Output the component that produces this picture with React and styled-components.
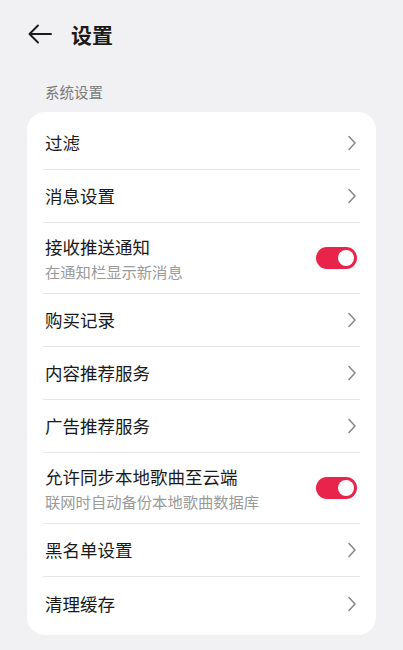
import React from "react";
import styled, { createGlobalStyle } from "styled-components";

const GlobalStyle = createGlobalStyle`
  html, body {
    margin: 0;
    padding: 0;
    background: #f1f1f3;
    font-family: "Noto Sans CJK SC", "Noto Sans", sans-serif;
  }
  *, *::before, *::after {
    box-sizing: border-box;
  }
`;

const Page = styled.div`
  width: 403px;
  min-height: 650px;
  background: #f1f1f3;
  padding: 0 27px;
`;

const Header = styled.header`
  height: 68px;
  display: flex;
  align-items: center;
  gap: 18px;
`;

const BackButton = styled.button`
  border: none;
  background: none;
  padding: 0;
  display: flex;
  align-items: center;
  cursor: pointer;
`;

const Title = styled.h1`
  margin: 0;
  font-size: 21px;
  font-weight: 700;
  color: #1a1a1a;
  line-height: 1;
`;

const SectionLabel = styled.div`
  margin: 14px 0 10px 18px;
  font-size: 14.5px;
  line-height: 20px;
  color: #7a7a7a;
`;

const Card = styled.div`
  background: #ffffff;
  border-radius: 18px;
  padding: 5px 16px 5px;
`;

const Row = styled.div`
  height: ${(p) => (p.$double ? 71 : 53)}px;
  display: flex;
  align-items: center;
  justify-content: space-between;
  padding: 0 3px 0 2px;
  border-bottom: ${(p) => (p.$last ? "none" : "1px solid #e6e6e8")};
`;

const TextBlock = styled.div`
  display: flex;
  flex-direction: column;
  gap: 2px;
`;

const Label = styled.span`
  font-size: 17.5px;
  line-height: 24px;
  color: #1a1a1a;
`;

const Sub = styled.span`
  font-size: 15.3px;
  line-height: 20px;
  color: #9a9a9a;
`;

const Toggle = styled.div`
  width: 41px;
  height: 22px;
  border-radius: 11px;
  background: #e8244b;
  position: relative;
  flex-shrink: 0;

  &::after {
    content: "";
    position: absolute;
    right: 3px;
    top: 3px;
    width: 16px;
    height: 16px;
    border-radius: 50%;
    background: #ffffff;
  }
`;

const Chevron = () => (
  <svg width="10" height="16" viewBox="0 0 10 16">
    <path d="M2 1.5 L8 8 L2 14.5" fill="none" stroke="#8a8a8a" strokeWidth="1.6" strokeLinecap="round" strokeLinejoin="round" />
  </svg>
);

const BackArrow = () => (
  <svg width="26" height="22" viewBox="0 0 26 22">
    <path d="M24 11 H3 M11 2.5 L2.5 11 L11 19.5" fill="none" stroke="#1a1a1a" strokeWidth="1.9" strokeLinecap="round" strokeLinejoin="round" />
  </svg>
);

const items = [
  { label: "过滤" },
  { label: "消息设置" },
  { label: "接收推送通知", sub: "在通知栏显示新消息", toggle: true },
  { label: "购买记录" },
  { label: "内容推荐服务" },
  { label: "广告推荐服务" },
  { label: "允许同步本地歌曲至云端", sub: "联网时自动备份本地歌曲数据库", toggle: true },
  { label: "黑名单设置" },
  { label: "清理缓存" },
];

export default function App() {
  return (
    <>
      <GlobalStyle />
      <Page>
        <Header>
          <BackButton aria-label="返回">
            <BackArrow />
          </BackButton>
          <Title>设置</Title>
        </Header>
        <SectionLabel>系统设置</SectionLabel>
        <Card>
          {items.map((item, i) => (
            <Row key={item.label} $double={!!item.sub} $last={i === items.length - 1}>
              <TextBlock>
                <Label>{item.label}</Label>
                {item.sub && <Sub>{item.sub}</Sub>}
              </TextBlock>
              {item.toggle ? <Toggle /> : <Chevron />}
            </Row>
          ))}
        </Card>
      </Page>
    </>
  );
}
